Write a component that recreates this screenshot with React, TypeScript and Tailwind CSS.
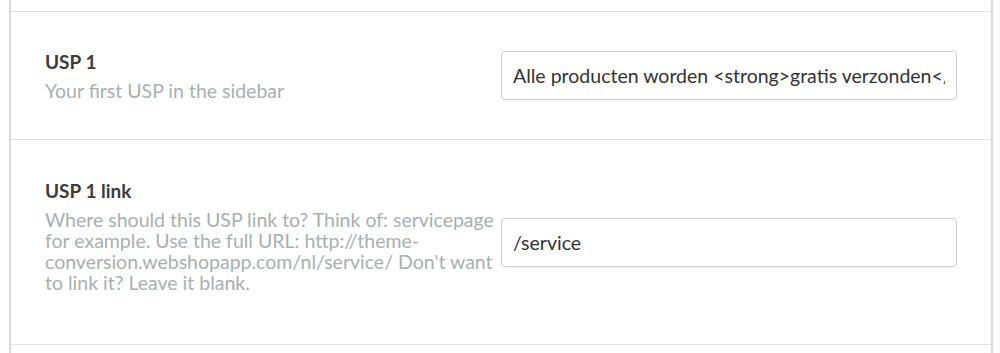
import React from 'react';

type Setting = {
  id: string;
  title: string;
  help: string[];
  value: string;
  rowHeight: string;
  textOffset: string;
};

const settings: Setting[] = [
  {
    id: 'usp1',
    title: 'USP 1',
    help: ['Your first USP in the sidebar'],
    value: 'Alle producten worden <strong>gratis verzonden</strong>',
    rowHeight: 'h-[128px]',
    textOffset: '',
  },
  {
    id: 'usp1-link',
    title: 'USP 1 link',
    help: [
      'Where should this USP link to? Think of: servicepage',
      'for example. Use the full URL: http://theme-',
      "conversion.webshopapp.com/nl/service/ Don't want",
      'to link it? Leave it blank.',
    ],
    value: '/service',
    rowHeight: 'h-[205px]',
    textOffset: 'mb-[13px]',
  },
];

function SettingRow({ setting }: { setting: Setting }) {
  return (
    <div
      className={`${setting.rowHeight} grid grid-cols-2 items-center border-b border-[#e4e4e4] px-[34px]`}
    >
      <div className={setting.textOffset}>
        <h3 className="text-[19px] leading-[24px] font-bold text-[#3b3b3b]">{setting.title}</h3>
        <p className="mt-[6px] text-[19.5px] leading-[21px] whitespace-nowrap text-[#a8b0b0]">
          {setting.help.map((line, i) => (
            <span key={i} className="block">
              {line}
            </span>
          ))}
        </p>
      </div>
      <input
        type="text"
        readOnly
        value={setting.value}
        className="relative h-[49px] w-full rounded-[4px] border border-[#cdcfcf] bg-white px-[11px] text-[19.5px] text-[#333] shadow-[0_1px_1px_rgba(0,0,0,0.04)] outline-none"
      />
    </div>
  );
}

export default function App() {
  return (
    <div className="h-[353px] w-[1000px] overflow-hidden bg-white font-['Lato','Open_Sans',sans-serif]">
      <div className="ml-[9px] mr-[7px] h-full border-x-2 border-[#dadada]">
        <div className="h-[12px] border-b border-[#e4e4e4]" />
        {settings.map((s) => (
          <SettingRow key={s.id} setting={s} />
        ))}
      </div>
    </div>
  );
}
